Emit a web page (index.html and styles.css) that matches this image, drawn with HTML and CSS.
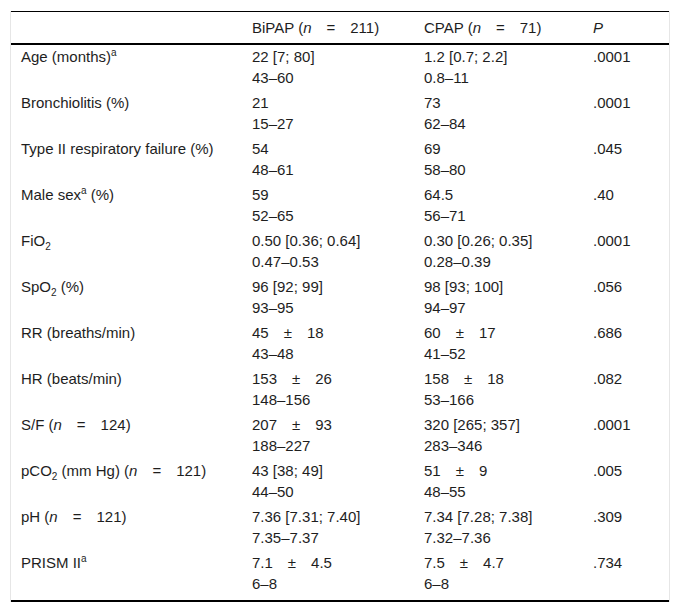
FILE: index.html
```html
<!DOCTYPE html>
<html>
<head>
<meta charset="utf-8">
<link rel="stylesheet" href="styles.css">
</head>
<body>
<div class="frame">
<table class="data">
<colgroup>
<col class="c1"><col class="c2"><col class="c3"><col class="c4">
</colgroup>
<thead>
<tr><th></th><th>BiPAP (<i>n</i>&#8195;=&#8195;211)</th><th>CPAP (<i>n</i>&#8195;=&#8195;71)</th><th><i>P</i></th></tr>
</thead>
<tbody>
<tr><td>Age (months)<sup>a</sup></td><td><div>22 [7; 80]</div><div>43–60</div></td><td><div>1.2 [0.7; 2.2]</div><div>0.8–11</div></td><td>.0001</td></tr>
<tr><td>Bronchiolitis (%)</td><td><div>21</div><div>15–27</div></td><td><div>73</div><div>62–84</div></td><td>.0001</td></tr>
<tr><td>Type II respiratory failure (%)</td><td><div>54</div><div>48–61</div></td><td><div>69</div><div>58–80</div></td><td>.045</td></tr>
<tr><td>Male sex<sup>a</sup> (%)</td><td><div>59</div><div>52–65</div></td><td><div>64.5</div><div>56–71</div></td><td>.40</td></tr>
<tr><td>FiO<sub>2</sub></td><td><div>0.50 [0.36; 0.64]</div><div>0.47–0.53</div></td><td><div>0.30 [0.26; 0.35]</div><div>0.28–0.39</div></td><td>.0001</td></tr>
<tr><td>SpO<sub>2</sub> (%)</td><td><div>96 [92; 99]</div><div>93–95</div></td><td><div>98 [93; 100]</div><div>94–97</div></td><td>.056</td></tr>
<tr><td>RR (breaths/min)</td><td><div>45&#8195;±&#8195;18</div><div>43–48</div></td><td><div>60&#8195;±&#8195;17</div><div>41–52</div></td><td>.686</td></tr>
<tr><td>HR (beats/min)</td><td><div>153&#8195;±&#8195;26</div><div>148–156</div></td><td><div>158&#8195;±&#8195;18</div><div>53–166</div></td><td>.082</td></tr>
<tr><td>S/F (<i>n</i>&#8195;=&#8195;124)</td><td><div>207&#8195;±&#8195;93</div><div>188–227</div></td><td><div>320 [265; 357]</div><div>283–346</div></td><td>.0001</td></tr>
<tr><td>pCO<sub>2</sub> (mm Hg) (<i>n</i>&#8195;=&#8195;121)</td><td><div>43 [38; 49]</div><div>44–50</div></td><td><div>51&#8195;±&#8195;9</div><div>48–55</div></td><td>.005</td></tr>
<tr><td>pH (<i>n</i>&#8195;=&#8195;121)</td><td><div>7.36 [7.31; 7.40]</div><div>7.35–7.37</div></td><td><div>7.34 [7.28; 7.38]</div><div>7.32–7.36</div></td><td>.309</td></tr>
<tr class="last"><td>PRISM II<sup>a</sup></td><td><div>7.1&#8195;±&#8195;4.5</div><div>6–8</div></td><td><div>7.5&#8195;±&#8195;4.7</div><div>6–8</div></td><td>.734</td></tr>
</tbody>
</table>
</div>
</body>
</html>
```
FILE: styles.css
```css
html, body {
  margin: 0;
  padding: 0;
  background: #fff;
}
body {
  font-family: "Liberation Sans", Arial, sans-serif;
  font-size: 15px;
  color: #1e1e1e;
}
.frame {
  margin: 11px 0 0 10px;
  width: 658px;
  border-left: 1px solid #e6e6e6;
  border-right: 1px solid #e6e6e6;
}
.data {
  width: 100%;
  border-collapse: collapse;
  table-layout: fixed;
  border-top: 1px solid #000;
  border-bottom: 2px solid #000;
}
.c1 { width: 231px; }
.c2 { width: 172px; }
.c3 { width: 169px; }
.c4 { width: 86px; }
.data th {
  font-weight: normal;
  text-align: left;
  height: 31px;
  padding: 0 10px;
  border-bottom: 2px solid #000;
  vertical-align: middle;
  line-height: 20px;
}
.data td {
  vertical-align: top;
  padding: 2px 10px 3px;
  line-height: 20.5px;
  text-align: left;
}
.data tr.last td {
  padding-bottom: 6px;
}
.data td div {
  white-space: nowrap;
}
sup, sub {
  font-size: 10px;
  line-height: 0;
}
sup { vertical-align: 6px; }
sub { vertical-align: -4px; }
```
